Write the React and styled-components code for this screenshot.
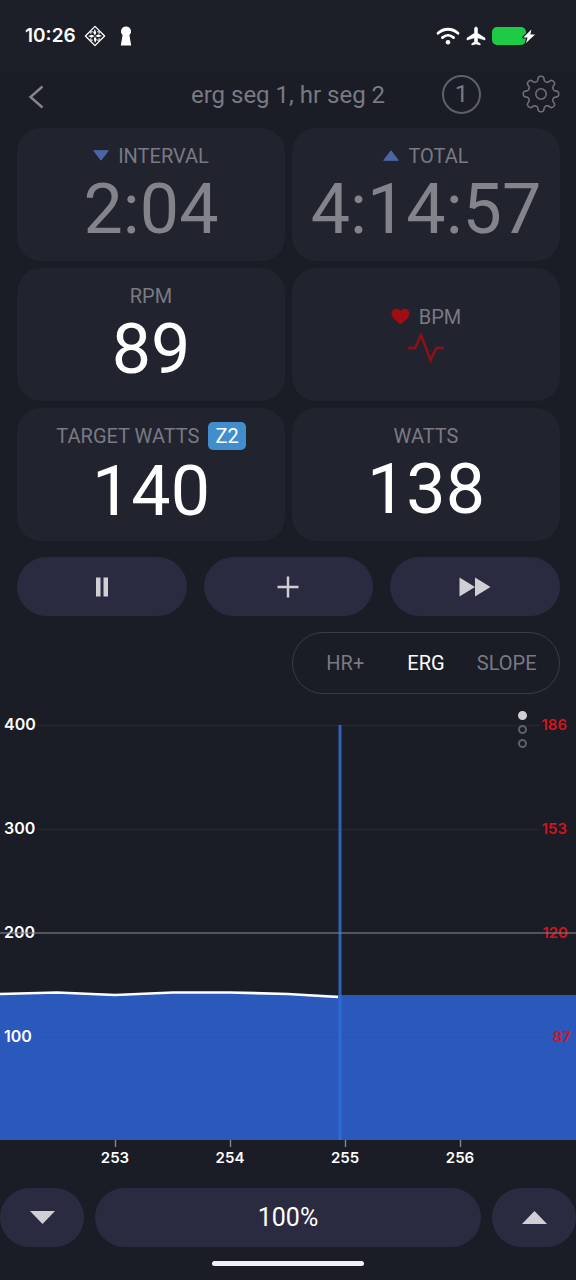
import React, { useState } from 'react'
import styled, { createGlobalStyle } from 'styled-components'

const GlobalStyle = createGlobalStyle`
    * {
        box-sizing: border-box;
    }
    body {
        margin: 0;
        background: #1a1c26;
        font-family: Roboto, "Liberation Sans", sans-serif;
    }
    button {
        margin: 0;
        padding: 0;
        border: 0;
        background: none;
        font-family: inherit;
        cursor: pointer;
    }
    svg {
        display: block;
    }
`
const Page = styled.div`
    display: flex;
    flex-direction: column;
    min-height: 100vh;
    background: #1a1c26;
    color: #ffffff;
`
const StatusBar = styled.div`
    display: flex;
    justify-content: space-between;
    align-items: center;
    height: 72px;
    padding: 0 40px 0 25px;
    background: #1c1f27;
`
const StatusGroup = styled.div`
    display: flex;
    align-items: center;
    gap: ${props => props.$gap};
`
const Clock = styled.span`
    font-family: Inter, Roboto, sans-serif;
    font-size: 19px;
    line-height: 24px;
    font-weight: 600;
`
const Header = styled.header`
    display: grid;
    grid-template-columns: 1fr auto 1fr;
    align-items: center;
    height: 44px;
    margin-bottom: 12px;
    padding: 0 16px;
`
const BackButton = styled.button`
    display: flex;
    align-items: center;
    justify-content: center;
    width: 40px;
    height: 40px;
    padding-top: 6px;
    color: #85868d;
`
const Title = styled.h1`
    margin: 0;
    padding-top: 2px;
    font-size: 24px;
    line-height: 28px;
    font-weight: 400;
    color: #797a83;
`
const HeaderActions = styled.div`
    display: flex;
    justify-content: flex-end;
    align-items: center;
    gap: 41px;
`
const LapButton = styled.button`
    width: 39px;
    height: 39px;
    border: 2px solid #5f6068;
    border-radius: 50%;
    font-size: 24px;
    line-height: 28px;
    color: #797a83;
`
const GearButton = styled.button`
    color: #6d6e76;
`
const Metrics = styled.section`
    display: grid;
    grid-template-columns: 1fr 1fr;
    grid-auto-rows: 133px;
    gap: 7px;
    padding: 0 16px 0 17px;
`
const Card = styled.div`
    display: flex;
    flex-direction: column;
    align-items: center;
    justify-content: center;
    border-radius: 24px;
    background: #21232e;
`
const CardLabel = styled.div`
    display: flex;
    align-items: center;
    gap: 9px;
    font-size: 20px;
    line-height: 24px;
    color: #797a83;
`
const CardValue = styled.div`
    margin-bottom: -4px;
    font-size: 70px;
    line-height: 82px;
    color: ${props => props.$dim ? '#83848b' : '#ffffff'};
`
const Zone = styled.span`
    padding: 0 7px;
    border-radius: 5px;
    background: #428dcb;
    font-size: 20px;
    line-height: 28px;
    color: #ffffff;
`
const Controls = styled.div`
    display: grid;
    grid-template-columns: repeat(3, 1fr);
    gap: 17px;
    margin-top: 16px;
    padding: 0 16px 0 17px;
`
const PillButton = styled.button`
    display: flex;
    align-items: center;
    justify-content: center;
    height: 59px;
    border-radius: 30px;
    background: #2a2b41;
    font-size: 25px;
    color: ${props => props.$bright ? '#ffffff' : '#d0d0d4'};
`
const ModeRow = styled.div`
    display: grid;
    grid-template-columns: 1fr 1fr;
    gap: 7px;
    margin-top: 16px;
    padding: 0 16px 0 17px;
`
const ModeSwitch = styled.div`
    grid-column: 2;
    display: grid;
    grid-template-columns: repeat(3, 1fr);
    height: 62px;
    padding: 0 12px;
    border: 1px solid #3a3b45;
    border-radius: 31px;
`
const ModeButton = styled.button`
    font-size: 20px;
    color: ${props => props.$active ? '#ffffff' : '#797a83'};
`
const ChartPanel = styled.section`
    position: relative;
    margin-top: 6px;
`
const Chart = styled.svg`
    width: 100%;
    height: auto;
`
const AxisText = styled.text`
    font-family: Inter, Roboto, sans-serif;
    font-size: ${props => props.$large ? '16px' : '15px'};
    font-weight: 600;
    fill: ${props => props.$red ? '#d4141c' : '#ffffff'};
`
const Pager = styled.div`
    position: absolute;
    top: 11px;
    right: 49px;
    display: flex;
    flex-direction: column;
    gap: 5px;
`
const Dot = styled.button`
    width: 9px;
    height: 9px;
    border: 2px solid ${props => props.$active ? '#d0d0d4' : '#5f6068'};
    border-radius: 50%;
    background: ${props => props.$active ? '#d0d0d4' : 'none'};
`
const BottomBar = styled.div`
    display: grid;
    grid-template-columns: 84px 1fr 84px;
    gap: 11px;
    margin-top: 8px;
`
const HomeIndicator = styled.div`
    align-self: center;
    width: 152px;
    height: 5px;
    margin: 14px 0;
    border-radius: 3px;
    background: #f0f0f5;
`

// eight rounded teeth, first one pointing up
const gearPath = () => {
    const points = []
    for (let i = 0; i < 240; i++) {
        const a = (i / 240) * Math.PI * 2
        const r = 15.4 + 2.4 * Math.tanh(1.9 * Math.cos(8 * a))
        points.push(`${(19 + r * Math.sin(a)).toFixed(2)} ${(19 - r * Math.cos(a)).toFixed(2)}`)
    }
    return `M${points.join('L')}Z`
}

const GEAR = gearPath()

const Gear = () => (
    <svg width="38" height="38" viewBox="0 0 38 38" fill="none" stroke="currentColor" strokeWidth="1.6" strokeLinejoin="round">
        <path d={GEAR}/>
        <circle cx="19" cy="19" r="5.2"/>
    </svg>
)

const Compass = () => (
    <svg width="22" height="22" viewBox="0 0 22 22" fill="none" stroke="#ffffff">
        <path d="M11 1.4 20.6 11 11 20.6 1.4 11Z" strokeWidth="1.3" strokeLinejoin="round"/>
        <path d="M11 4 12.2 8 11 10.6 9.2 7.6ZM18 11 14 12.2 11.4 11 14.4 9.2ZM11 18 9.8 14 11 11.4 12.8 14.4ZM4 11 8 9.8 10.6 11 7.6 12.8Z" fill="#ffffff" stroke="none"/>
        <path d="M6.8 8.8V6.8H8.8M13.2 6.8H15.2V8.8M15.2 13.2V15.2H13.2M8.8 15.2H6.8V13.2" strokeWidth="1"/>
    </svg>
)

const Keyhole = () => (
    <svg width="12" height="20" viewBox="0 0 12 20" fill="#ffffff">
        <path d="M6 .4A4.9 4.9 0 0 0 2.6 8.9L.8 19.6H11.2L9.4 8.9A4.9 4.9 0 0 0 6 .4Z"/>
    </svg>
)

const Wifi = () => (
    <svg width="24" height="18" viewBox="0 0 24 18" fill="none" stroke="#ffffff" strokeWidth="2.8" strokeLinecap="round">
        <path d="M2 6.2C7.8 .9 16.2 .9 22 6.2M6.4 10.6C9.7 7.7 14.3 7.7 17.6 10.6"/>
        <circle cx="12" cy="15.3" r="2.3" fill="#ffffff" stroke="none"/>
    </svg>
)

const Plane = () => (
    <svg width="20" height="20" viewBox="0 0 20 20" fill="#ffffff" stroke="#ffffff" strokeWidth=".6" strokeLinejoin="round">
        <path d="M10 1C9 1 8.5 1.8 8.5 2.8V7.2L1 12.1V14L8.5 11.8V15.8L5.8 17.7V19L10 17.9 14.2 19V17.7L11.5 15.8V11.8L19 14V12.1L11.5 7.2V2.8C11.5 1.8 11 1 10 1Z"/>
    </svg>
)

const Battery = () => (
    <svg width="44" height="20" viewBox="0 0 44 20">
        <rect x="0" y="1" width="34" height="18" rx="5" fill="#1dcb45"/>
        <path d="M39.4 3.6 31.4 11.4H35.6L34 17 43 8.6H38.4Z" fill="#ffffff" stroke="#1c1f27" strokeWidth="2.4" paintOrder="stroke" strokeLinejoin="round"/>
    </svg>
)

const Triangle = ({ up }) => (
    <svg width="16" height="11" viewBox="0 0 16 11" fill="#4a66a5" stroke="#4a66a5" strokeLinejoin="round">
        <path d={up ? 'M8 .8 15.3 10.3H.7Z' : 'M.7 .7H15.3L8 10.2Z'}/>
    </svg>
)

const Arrow = ({ up }) => (
    <svg width="25" height="13" viewBox="0 0 25 13" fill="currentColor">
        <path d={up ? 'M12.5 0 25 13H0Z' : 'M0 0H25L12.5 13Z'}/>
    </svg>
)

const Heart = () => (
    <svg width="19" height="17" viewBox="0 0 19 17" fill="#a00d12">
        <path d="M9.5 16.2C4.4 12.5 .6 9.6 .6 5.7 .6 2.8 2.8 .8 5.3 .8 7 .8 8.6 1.6 9.5 3 10.4 1.6 12 .8 13.7 .8 16.2 .8 18.4 2.8 18.4 5.7 18.4 9.6 14.6 12.5 9.5 16.2Z"/>
    </svg>
)

const Pulse = () => (
    <svg width="36" height="36" viewBox="0 0 36 36" fill="none" stroke="#8f1118" strokeWidth="2.6">
        <path d="M0 19H7L13 6 22.5 31 28.5 19H36"/>
    </svg>
)

const Pause = () => (
    <svg width="14" height="20" viewBox="0 0 14 20" fill="currentColor">
        <path d="M1 .5H5.5V19.5H1ZM8.5 .5H13V19.5H8.5Z"/>
    </svg>
)

const Plus = () => (
    <svg width="22" height="22" viewBox="0 0 22 22" stroke="currentColor" strokeWidth="2.4">
        <path d="M11 .5V21.5M.5 11H21.5"/>
    </svg>
)

const Forward = () => (
    <svg width="32" height="20" viewBox="0 0 32 20" fill="currentColor">
        <path d="M.5 .5 16 10 .5 19.5ZM16 .5 31.5 10 16 19.5Z"/>
    </svg>
)

const powerAxis = [
    { y: 25, watts: 400, bpm: 186, right: 567 },
    { y: 129, watts: 300, bpm: 153, right: 567 },
    { y: 233, watts: 200, bpm: 120, right: 568 },
    { y: 337, watts: 100, bpm: 87, right: 571 },
]

const minutes = [
    { x: 115, label: 253 },
    { x: 230, label: 254 },
    { x: 345, label: 255 },
    { x: 460, label: 256 },
]

const modes = ['HR+', 'ERG', 'SLOPE']

const WorkoutChart = () => (
    <Chart viewBox="0 0 576 480" role="img" aria-label="Power and heart rate">
        <path d="M38 25.5H540M38 129.5H540" stroke="#242631" strokeWidth="1.5"/>
        <path d="M0 294 57 293 115 295 173 293 230 293 288 294 338 295H576V440H0Z" fill="#2a59bb"/>
        <path d="M38 337H550" stroke="#2855b3" strokeWidth="1"/>
        <path d="M340 25V295" stroke="#2f62b4" strokeWidth="3"/>
        <path d="M340 295V440" stroke="#2a6bd8" strokeWidth="3"/>
        <path d="M0 294 57 292.5 115 295 173 292.5 230 292.5 288 294 338 297" fill="none" stroke="#ffffff" strokeWidth="2.6"/>
        {powerAxis.map(row => (
            <g key={row.watts}>
                <AxisText $large x="4" y={row.y + 5}>{row.watts}</AxisText>
                <AxisText $red x={row.right} y={row.y + 5} textAnchor="end">{row.bpm}</AxisText>
            </g>
        ))}
        <path d="M0 233H576" stroke="#808188" strokeOpacity=".75" strokeWidth="1.6"/>
        {minutes.map(tick => (
            <g key={tick.label}>
                <path d={`M${tick.x + 0.5} 440V447`} stroke="#85868d" strokeWidth="1.4"/>
                <AxisText x={tick.x} y="463" textAnchor="middle">{tick.label}</AxisText>
            </g>
        ))}
    </Chart>
)

const App = () => {
    const [mode, setMode] = useState('ERG')
    const [page, setPage] = useState(0)
    const [intensity, setIntensity] = useState(100)

    return (
        <>
            <GlobalStyle/>
            <Page>
                <StatusBar>
                    <StatusGroup $gap="8px">
                        <Clock>10:26</Clock>
                        <StatusGroup $gap="14px">
                            <Compass/>
                            <Keyhole/>
                        </StatusGroup>
                    </StatusGroup>
                    <StatusGroup $gap="6px">
                        <Wifi/>
                        <Plane/>
                        <Battery/>
                    </StatusGroup>
                </StatusBar>

                <Header>
                    <BackButton type="button" aria-label="Back">
                        <svg width="16" height="24" viewBox="0 0 16 24" fill="none" stroke="currentColor" strokeWidth="2.4">
                            <path d="M14.5 1.5 2.5 12 14.5 22.5"/>
                        </svg>
                    </BackButton>
                    <Title>erg seg 1, hr seg 2</Title>
                    <HeaderActions>
                        <LapButton type="button">1</LapButton>
                        <GearButton type="button" aria-label="Settings"><Gear/></GearButton>
                    </HeaderActions>
                </Header>

                <Metrics>
                    <Card>
                        <CardLabel><Triangle/>INTERVAL</CardLabel>
                        <CardValue $dim>2:04</CardValue>
                    </Card>
                    <Card>
                        <CardLabel><Triangle up/>TOTAL</CardLabel>
                        <CardValue $dim>4:14:57</CardValue>
                    </Card>
                    <Card>
                        <CardLabel>RPM</CardLabel>
                        <CardValue>89</CardValue>
                    </Card>
                    <Card>
                        <CardLabel><Heart/>BPM</CardLabel>
                        <Pulse/>
                    </Card>
                    <Card>
                        <CardLabel>TARGET WATTS<Zone>Z2</Zone></CardLabel>
                        <CardValue>140</CardValue>
                    </Card>
                    <Card>
                        <CardLabel>WATTS</CardLabel>
                        <CardValue>138</CardValue>
                    </Card>
                </Metrics>

                <Controls>
                    <PillButton type="button" aria-label="Pause"><Pause/></PillButton>
                    <PillButton type="button" aria-label="Add"><Plus/></PillButton>
                    <PillButton type="button" aria-label="Next interval"><Forward/></PillButton>
                </Controls>

                <ModeRow>
                    <ModeSwitch role="group" aria-label="Mode">
                        {modes.map(name => (
                            <ModeButton key={name} type="button" $active={mode === name} aria-pressed={mode === name} onClick={() => setMode(name)}>
                                {name}
                            </ModeButton>
                        ))}
                    </ModeSwitch>
                </ModeRow>

                <ChartPanel>
                    <WorkoutChart/>
                    <Pager>
                        {[0, 1, 2].map(i => (
                            <Dot key={i} type="button" $active={page === i} aria-label={`Chart ${i + 1}`} onClick={() => setPage(i)}/>
                        ))}
                    </Pager>
                </ChartPanel>

                <BottomBar>
                    <PillButton type="button" aria-label="Decrease" onClick={() => setIntensity(intensity - 1)}>
                        <Arrow/>
                    </PillButton>
                    <PillButton type="button" $bright onClick={() => setIntensity(100)}>{intensity}%</PillButton>
                    <PillButton type="button" aria-label="Increase" onClick={() => setIntensity(intensity + 1)}>
                        <Arrow up/>
                    </PillButton>
                </BottomBar>
                <HomeIndicator/>
            </Page>
        </>
    )
}

export default App
